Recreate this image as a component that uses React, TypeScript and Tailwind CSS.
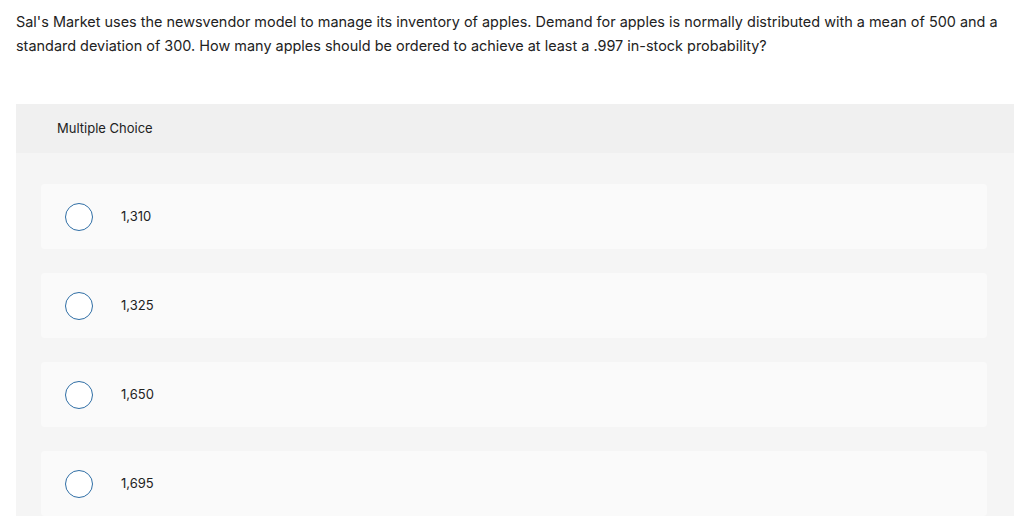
const options = ["1,310", "1,325", "1,650", "1,695"];

export default function App() {
  return (
    <div
      className="min-h-screen bg-white text-[#333]"
      style={{ fontFamily: 'Inter, "Open Sans", sans-serif' }}
    >
      <p className="px-4 pt-[10px] text-[14.45px] leading-6 text-[#222]">
        Sal's Market uses the newsvendor model to manage its inventory of apples. Demand for apples is normally
        distributed with a mean of 500 and a standard deviation of 300. How many apples should be ordered to
        achieve at least a .997 in-stock probability?
      </p>

      <div className="ml-4 mr-[10px] mt-[46px] bg-[#f5f5f5]">
        <div className="h-[49px] bg-[#f0f0f0] pl-[41px] flex items-center text-[13px] text-[#222]">
          Multiple Choice
        </div>
        <div className="flex flex-col gap-6 pl-[25px] pr-[27px] pt-[31px]">
          {options.map((o) => (
            <div key={o} className="flex h-[65px] items-center rounded-[4px] bg-[#fafafa]">
              <span className="ml-6 h-[28px] w-[28px] rounded-full border-[1.5px] border-[#2f6ea5] bg-white" />
              <span className="ml-[28px] text-[13px] text-[#222]">{o}</span>
            </div>
          ))}
        </div>
      </div>
    </div>
  );
}
